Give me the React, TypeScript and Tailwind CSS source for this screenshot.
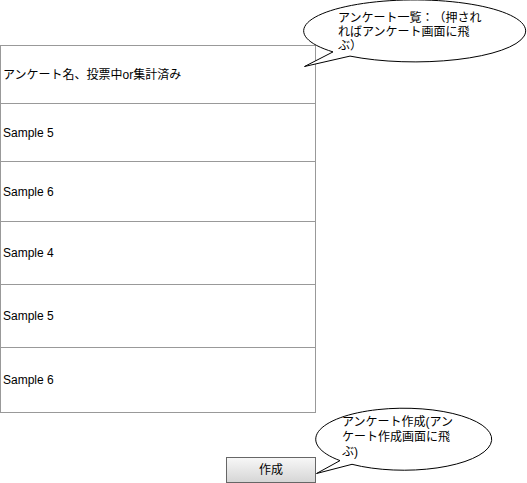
import React from 'react';

const rows = [
  { label: 'アンケート名、投票中or集計済み', h: 'h-[58px]' },
  { label: 'Sample 5', h: 'h-[58px]' },
  { label: 'Sample 6', h: 'h-[60px]' },
  { label: 'Sample 4', h: 'h-[63px]' },
  { label: 'Sample 5', h: 'h-[63px]' },
  { label: 'Sample 6', h: 'h-[64px]' },
];

const Callouts: React.FC = () => (
  <svg
    className="absolute inset-0 pointer-events-none"
    width={527}
    height={483}
    viewBox="0 0 527 483"
  >
    {/* list callout */}
    <path
      d="M333 51.9 A111 31 0 1 1 350 56.1 L304.5 66.5 Z"
      fill="#fff"
      stroke="#000"
      strokeWidth={1}
    />
    {/* create callout */}
    <path
      d="M340 460.6 A88 31 0 1 1 352 464.3 L316.5 473.5 Z"
      fill="#fff"
      stroke="#000"
      strokeWidth={1}
    />
  </svg>
);

export default function App() {
  return (
    <div className="relative w-[527px] h-[483px] bg-white text-black text-[12px] [text-spacing-trim:space-all] font-['Liberation_Sans','Noto_Sans_CJK_JP',sans-serif]">
      <div className="pt-[45px] w-[316px]">
        <div className="border border-[#999]">
          {rows.map((r, i) => (
            <div
              key={i}
              className={`${r.h} flex items-center pl-[2px] ${i < rows.length - 1 ? 'border-b border-[#999]' : ''}`}
            >
              {r.label}
            </div>
          ))}
        </div>
      </div>

      <div className="mt-[44px] ml-[226px] w-[90px] h-[26px] flex items-center justify-center border border-[#666] bg-gradient-to-b from-[#f7f7f7] to-[#d6d6d6]">
        作成
      </div>

      <Callouts />

      <div className="absolute left-[338px] top-[11px] leading-[14px] whitespace-nowrap">
        アンケート一覧：（押され
        <br />
        ればアンケート画面に飛
        <br />
        ぶ）
      </div>

      <div className="absolute left-[342px] top-[415px] leading-[15px] whitespace-nowrap">
        アンケート作成(アン
        <br />
        ケート作成画面に飛
        <br />
        ぶ)
      </div>
    </div>
  );
}
